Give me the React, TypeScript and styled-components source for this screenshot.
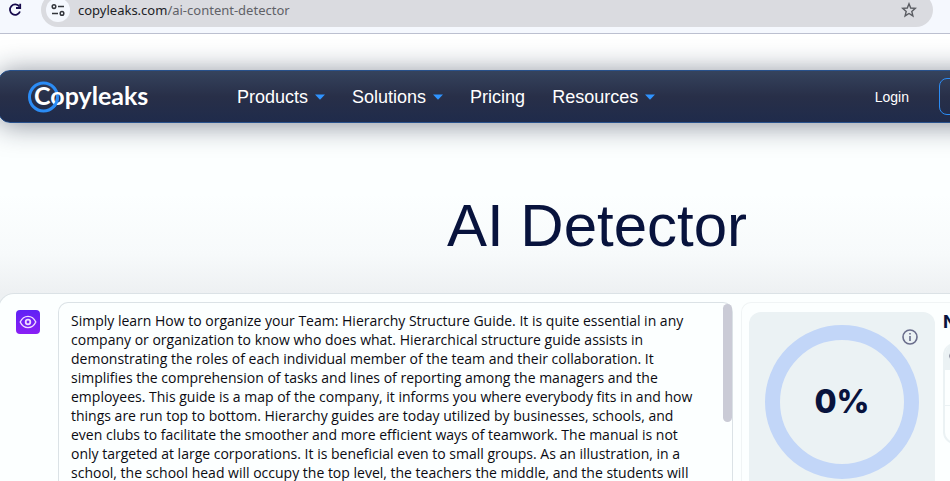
import React from "react";
import styled, { createGlobalStyle } from "styled-components";

const GlobalStyle = createGlobalStyle`
  * { box-sizing: border-box; }
  html, body { margin: 0; background: #fcffff; }
  body { overflow: hidden; font-family: "Liberation Sans", Arial, sans-serif; color: #08133d; }
  button, textarea { font: inherit; }
`;

const Shell = styled.div`
  height: 100vh;
  display: flex;
  flex-direction: column;
  overflow: hidden;
`;

const BrowserBar = styled.header`
  display: flex;
  align-items: center;
  gap: 16px;
  height: 34px;
  padding: 0 17px 14px 5px;
  background: #f5f8fe;
  border-bottom: 1px solid #bcc0d0;
  flex: none;
`;

const IconButton = styled.button`
  display: flex;
  align-items: center;
  justify-content: center;
  padding: 0;
  border: 0;
  background: transparent;
  color: #5a5c62;
  flex: none;
`;

const ReloadButton = styled(IconButton)`
  width: 20px;
  height: 20px;
  color: #170a4c;
`;

const AddressBar = styled.div`
  display: flex;
  align-items: center;
  flex: 1;
  gap: 8px;
  height: 34px;
  padding: 0 16px 0 5px;
  border-radius: 17px;
  background: #dadbe0;
  font: 13px/20px "Noto Sans", "Open Sans", sans-serif;
`;

const SiteButton = styled(IconButton)`
  width: 24px;
  height: 24px;
  border-radius: 12px;
  background: #f5f8fe;
  color: #33353b;
`;

const Address = styled.span`
  flex: 1;
  color: #5f6167;
`;

const Host = styled.span`
  color: #202125;
`;

const Site = styled.main`
  flex: 1;
  min-height: 0;
  display: flex;
  flex-direction: column;
  width: calc(100% + 248px);
  margin-left: -2px;
  padding-top: 36px;
  background: linear-gradient(#ffffff 0, #fcffff 60px, #fcffff 160px, #f7fafb 220px, #edf0f2 260px);
`;

const NavBar = styled.nav`
  display: flex;
  align-items: center;
  flex: none;
  height: 53px;
  padding: 0 136px 0 28px;
  border: 1px solid #28518c;
  border-radius: 12px;
  background: linear-gradient(#35435d, #282f48 50%, #1f2b4b);
  box-shadow: 0 2px 28px rgba(20, 25, 50, 0.5);
`;

const Brand = styled.a`
  display: flex;
  width: 210px;
  color: #fff;
`;

const Menu = styled.ul`
  display: flex;
  gap: 27px;
  margin: 0;
  padding: 0;
  list-style: none;
  flex: 1;
`;

const MenuButton = styled.button`
  display: flex;
  align-items: center;
  gap: 7px;
  padding: 0;
  border: 0;
  background: transparent;
  color: #fff;
  font-size: 18px;
  line-height: 24px;
`;

const Login = styled.a`
  margin-right: 30px;
  color: #fff;
  font-size: 14px;
  text-decoration: none;
`;

const NavAction = styled.button`
  width: 120px;
  height: 37px;
  border: 1px solid #2b8cf5;
  border-radius: 8px;
  background: transparent;
`;

const Title = styled.h1`
  margin: 68px 0 32px;
  font-size: 60px;
  line-height: 70px;
  font-weight: 400;
  text-align: center;
`;

const Panel = styled.section`
  display: flex;
  flex: 1;
  min-height: 0;
  padding: 8px 0 0 16px;
  border: 1px solid #dbe2e6;
  border-bottom: 0;
  border-radius: 16px 16px 0 0;
  background: #fcffff;
`;

const ToolButton = styled.button`
  display: flex;
  align-items: center;
  justify-content: center;
  flex: none;
  width: 24px;
  height: 24px;
  margin: 8px 18px 0 1px;
  padding: 0;
  border: 0;
  border-radius: 4px;
  background: linear-gradient(#5f22f5, #8a1ff5);
  color: #f0dcff;
`;

const Editor = styled.div`
  display: flex;
  flex: 1;
  min-width: 0;
  border: 1px solid #dbe2e6;
  border-bottom: 0;
  border-radius: 10px 10px 0 0;
`;

const TextBox = styled.textarea`
  flex: 1;
  min-width: 0;
  padding: 8px 26px 0 12px;
  border: 0;
  outline: 0;
  resize: none;
  overflow: hidden;
  background: transparent;
  color: #0b0b12;
  font: 14px/19px "Open Sans", "Noto Sans", sans-serif;
`;

const ScrollThumb = styled.div`
  width: 9px;
  height: 118px;
  margin-top: 1px;
  border-radius: 5px;
  background: #cacbd6;
`;

const Results = styled.div`
  display: flex;
  gap: 8px;
  width: 454px;
  flex: none;
  margin-left: 8px;
  padding: 9px 0 0 7px;
  border: 1px solid #f0f4f5;
  border-width: 1px 0 0 1px;
  border-radius: 10px 0 0 0;
`;

const ScoreCard = styled.div`
  display: grid;
  justify-items: center;
  align-content: start;
  position: relative;
  width: 186px;
  padding-top: 13px;
  border-radius: 12px 12px 0 0;
  background: #ebf2f4;
`;

const Ring = styled.div`
  display: flex;
  align-items: center;
  justify-content: center;
  width: 154px;
  height: 154px;
  border: 15px solid #c2d6f8;
  border-radius: 50%;
  font: 800 32px/40px Inter, sans-serif;
`;

const InfoButton = styled(IconButton)`
  position: absolute;
  top: 17px;
  right: 17px;
  color: #6a6e8c;
`;

const Details = styled.div`
  flex: 1;
`;

const DetailsTitle = styled.h2`
  margin: 0 0 11px;
  font: 700 18px/20px Inter, sans-serif;
`;

const DetailsCard = styled.div`
  border: 2px solid #ebf2f4;
  border-top: 0;
  border-radius: 12px;
  overflow: hidden;
`;

const DetailsRow = styled.div<{ $shaded?: boolean }>`
  display: flex;
  align-items: center;
  height: ${(p) => (p.$shaded ? 27 : 36)}px;
  padding: 0 4px;
  border-bottom: 1px solid #ebf2f4;
  background: ${(p) => (p.$shaded ? "#ebf2f4" : "transparent")};
`;

const sample =
  "Simply learn How to organize your Team: Hierarchy Structure Guide. It is quite essential in any company or organization to know who does what. Hierarchical structure guide assists in demonstrating the roles of each individual member of the team and their collaboration. It simplifies the comprehension of tasks and lines of reporting among the managers and the employees. This guide is a map of the company, it informs you where everybody fits in and how things are run top to bottom. Hierarchy guides are today utilized by businesses, schools, and even clubs to facilitate the smoother and more efficient ways of teamwork. The manual is not only targeted at large corporations. It is beneficial even to small groups. As an illustration, in a school, the school head will occupy the top level, the teachers the middle, and the students will";

const menu = [
  { label: "Products", nested: true },
  { label: "Solutions", nested: true },
  { label: "Pricing", nested: false },
  { label: "Resources", nested: true },
];

const Caret = () => (
  <svg width="10" height="6" viewBox="0 0 10 6" aria-hidden="true">
    <path d="M0 0.5h10L5 5.8z" fill="#2f93ff" />
  </svg>
);

const Logo = () => (
  <svg width="126" height="36" viewBox="0 0 126 36" role="img" aria-label="Copyleaks">
    <circle cx="16.5" cy="18" r="14" fill="none" stroke="#2b8cf5" strokeWidth="3" />
    <text x="7" y="26" fill="#fff" fontFamily="Lato, sans-serif" fontWeight="700" fontSize="25">
      Copyleaks
    </text>
    <path d="M30.5 18.5A14 14 0 0 1 26.5 27.8" fill="none" stroke="#2b8cf5" strokeWidth="3" />
  </svg>
);

export default function App() {
  return (
    <Shell>
      <GlobalStyle />
      <BrowserBar>
        <ReloadButton aria-label="Reload">
          <svg width="16" height="16" viewBox="0 0 16 16" fill="none" stroke="currentColor" strokeWidth="1.8">
            <path d="M12.4 4.6A5.2 5.2 0 1 0 13 9.5" />
            <path d="M13.2 1.8V6H9" />
          </svg>
        </ReloadButton>
        <AddressBar>
          <SiteButton aria-label="Site information">
            <svg width="14" height="12" viewBox="0 0 14 12" fill="none" stroke="currentColor" strokeWidth="1.5">
              <circle cx="3" cy="2.6" r="1.8" />
              <path d="M7 2.6h6M1 9.4h6" />
              <circle cx="11" cy="9.4" r="1.8" />
            </svg>
          </SiteButton>
          <Address>
            <Host>copyleaks.com</Host>/ai-content-detector
          </Address>
          <IconButton aria-label="Bookmark">
            <svg width="16" height="16" viewBox="0 0 16 16" fill="none" stroke="currentColor" strokeWidth="1.4">
              <path d="M8 1.8l1.7 4.2 4.6.4-3.5 3 1.1 4.5L8 11.5l-3.9 2.4 1.1-4.5-3.5-3 4.6-.4z" />
            </svg>
          </IconButton>
        </AddressBar>
      </BrowserBar>
      <Site>
        <NavBar>
          <Brand href="#">
            <Logo />
          </Brand>
          <Menu>
            {menu.map((item) => (
              <li key={item.label}>
                <MenuButton>
                  {item.label}
                  {item.nested && <Caret />}
                </MenuButton>
              </li>
            ))}
          </Menu>
          <Login href="#">Login</Login>
          <NavAction aria-label="Get started" />
        </NavBar>
        <Title>AI Detector</Title>
        <Panel>
          <ToolButton aria-label="AI detector">
            <svg width="18" height="14" viewBox="0 0 18 14" fill="none" stroke="currentColor" strokeWidth="1.4">
              <path d="M1.2 7C3 3.2 6 1.4 9 1.4S15 3.2 16.8 7c-1.8 3.8-4.8 5.6-7.8 5.6S3 10.8 1.2 7z" />
              <circle cx="9" cy="7" r="2.3" strokeWidth="1.8" />
            </svg>
          </ToolButton>
          <Editor>
            <TextBox aria-label="Text to scan" defaultValue={sample} spellCheck={false} />
            <ScrollThumb />
          </Editor>
          <Results>
            <ScoreCard>
              <Ring>0%</Ring>
              <InfoButton aria-label="About this score">
                <svg width="16" height="16" viewBox="0 0 16 16" fill="none" stroke="currentColor" strokeWidth="1.6">
                  <circle cx="8" cy="8" r="7" />
                  <path d="M8 7v5M8 4v1.6" />
                </svg>
              </InfoButton>
            </ScoreCard>
            <Details>
              <DetailsTitle>N</DetailsTitle>
              <DetailsCard>
                <DetailsRow $shaded>
                  <svg width="8" height="8" viewBox="0 0 8 8" fill="none" stroke="#8a8d9c" aria-hidden="true">
                    <circle cx="4" cy="4" r="3.5" />
                  </svg>
                </DetailsRow>
                <DetailsRow />
                <DetailsRow />
              </DetailsCard>
            </Details>
          </Results>
        </Panel>
      </Site>
    </Shell>
  );
}
